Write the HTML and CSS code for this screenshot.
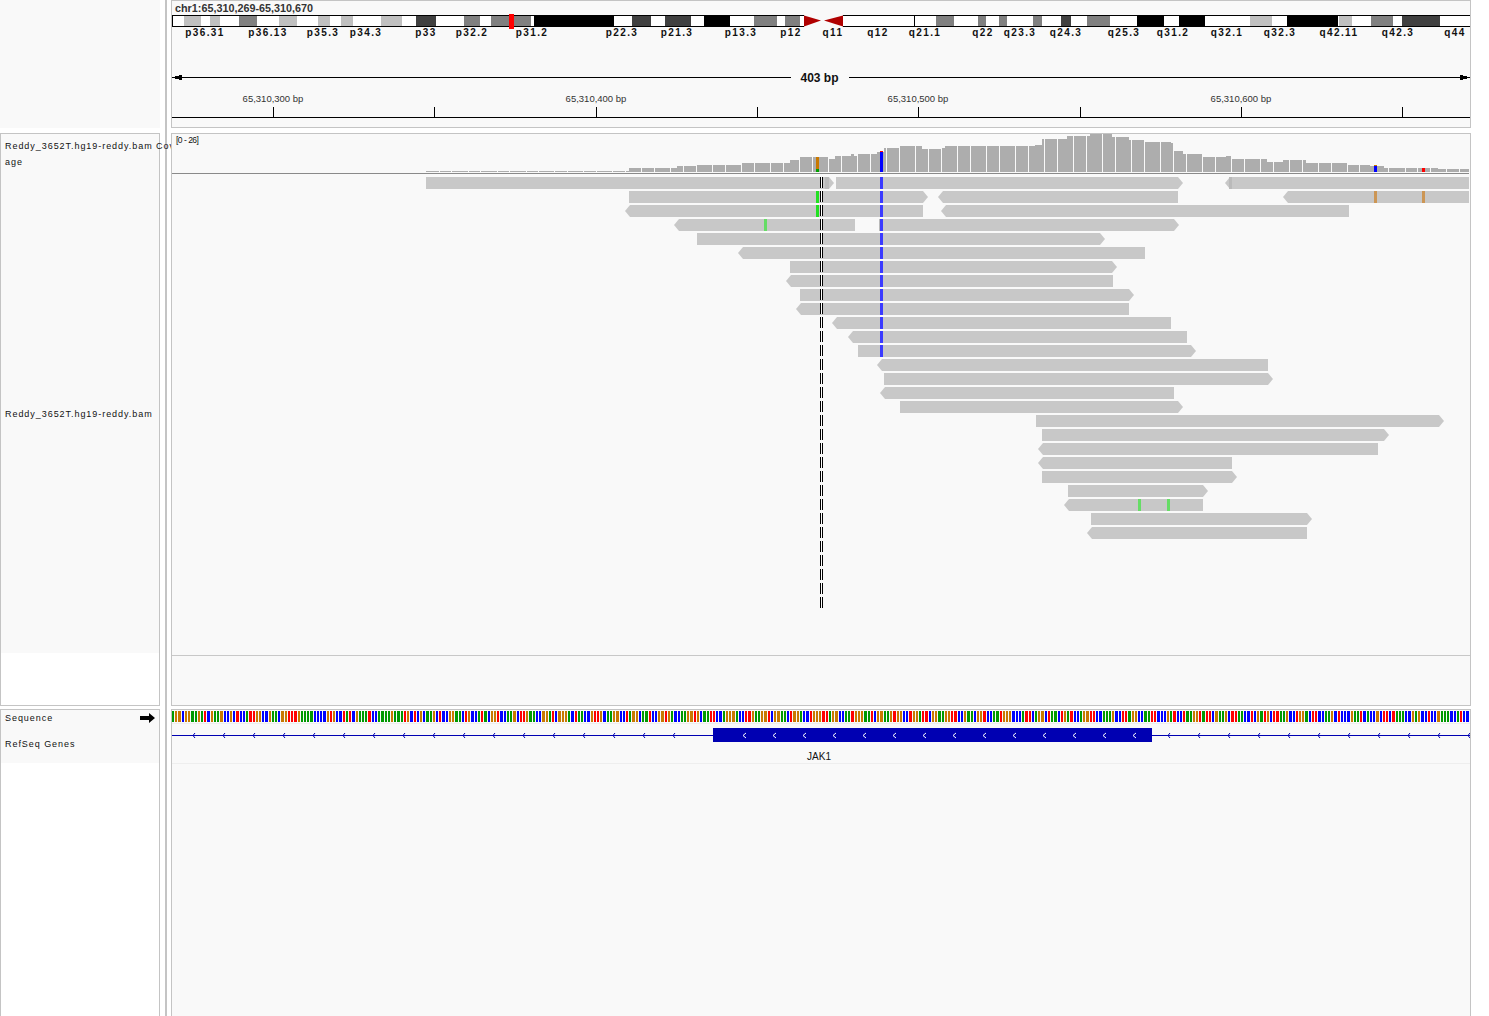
FILE: index.html
```html
<!DOCTYPE html>
<html lang="en">
<head>
    <meta charset="UTF-8">
    <meta name="viewport" content="width=device-width, initial-scale=1.0">
    <title>IGV - JAK1</title>
    <link rel="stylesheet" href="styles.css">
</head>
<body>
    <div class="igv">
        <div class="gutter"></div>

        <div class="name-top"></div>
        <div class="track-box track-top">
            <svg id="headerSvg" class="canvas" viewBox="172 1 1298 126" width="1298" height="126"></svg>
        </div>

        <div class="name-box name-data">
            <div class="name-fill">
                <div class="label label-coverage">
                    <span class="label-line">Reddy_3652T.hg19-reddy.bam Cov</span>
                    <span class="label-line">age</span>
                </div>
                <div class="label label-reads">Reddy_3652T.hg19-reddy.bam</div>
            </div>
        </div>
        <div class="track-box track-data">
            <svg id="dataSvg" class="canvas" viewBox="172 134 1298 571" width="1298" height="571"></svg>
        </div>

        <div class="name-box name-features">
            <div class="name-fill name-fill-features">
                <div class="label label-sequence">
                    <span>Sequence</span>
                    <svg class="seq-arrow" viewBox="0 0 15 10" width="15" height="10">
                        <path d="M0 3H9V0L15 5L9 10V7H0Z"></path>
                    </svg>
                </div>
                <div class="label label-genes">RefSeq Genes</div>
            </div>
        </div>
        <div class="track-box track-features">
            <svg id="featureSvg" class="canvas" viewBox="172 710 1298 306" width="1298" height="306"></svg>
        </div>
    </div>

    <script src="app.js"></script>
</body>
</html>
```

FILE: styles.css
```css
* {
    box-sizing: border-box;
}

body {
    margin: 0;
    background-color: #fff;
    font-family: "Liberation Sans", Arial, sans-serif;
    color: #111;
}

.igv {
    display: grid;
    grid-template-columns: 160px 11px 1300px;
    grid-template-rows: 133px 576px 307px;
    width: 1489px;
    height: 1016px;
    overflow: hidden;
}

.gutter {
    grid-column: 2;
    grid-row: 1 / 4;
    width: 2px;
    margin-left: 5px;
    background-color: #c4c4c4;
}

.name-top {
    grid-column: 1;
    grid-row: 1;
    height: 128px;
    background-color: #f9f9f9;
}

.track-box {
    grid-column: 3;
    background-color: #f9f9f9;
    border: 1px solid #c4c4c4;
    overflow: hidden;
}

.track-top {
    grid-row: 1;
    height: 128px;
}

.track-data {
    grid-row: 2;
    height: 573px;
}

.track-features {
    grid-row: 3;
    height: 308px;
    border-bottom: none;
}

.canvas {
    display: block;
}

.name-box {
    grid-column: 1;
    background-color: #fff;
    border: 1px solid #c4c4c4;
}

.name-data {
    grid-row: 2;
    height: 573px;
}

.name-features {
    grid-row: 3;
    height: 308px;
    border-bottom: none;
}

.name-fill {
    display: flex;
    flex-direction: column;
    height: 519px;
    background-color: #f9f9f9;
}

.name-fill-features {
    height: 53px;
}

.label {
    padding-left: 4px;
    font-size: 9px;
    letter-spacing: 0.95px;
    color: #111;
}

.label-coverage {
    flex: none;
    height: 40px;
    padding-top: 4px;
    line-height: 16px;
}

.label-line {
    display: block;
    white-space: nowrap;
}

.label-reads {
    flex: 1;
    display: flex;
    align-items: center;
}

.label-sequence {
    display: flex;
    justify-content: space-between;
    align-items: center;
    height: 16px;
    padding-right: 4px;
}

.label-genes {
    margin-top: 10px;
    line-height: 16px;
}

.seq-arrow {
    display: block;
    fill: #000;
}

/* chromosome ideogram */
.band {
    shape-rendering: crispEdges;
}
.band-white { fill: #fff; }
.band-light { fill: #c0c0c0; }
.band-gray { fill: #808080; }
.band-dark { fill: #404040; }
.band-black { fill: #000; }
.band-sep { fill: #000; }
.band-edge { fill: #000; }
.band-marker { fill: #f00; }
.centromere { fill: #b00000; }

.band-name {
    font-size: 10px;
    font-weight: bold;
    letter-spacing: 1.4px;
    text-anchor: middle;
    fill: #111;
}

.locus {
    font-size: 10.8px;
    font-weight: bold;
    fill: #333;
}

.span-text {
    font-size: 12px;
    font-weight: bold;
    text-anchor: middle;
    fill: #111;
}

.ruler-text {
    font-size: 9.5px;
    text-anchor: middle;
    fill: #333;
}

.ink {
    fill: #000;
    shape-rendering: crispEdges;
}

/* coverage */
.cov { fill: #adadad; shape-rendering: crispEdges; }
.cov-gap { fill: #f9f9f9; shape-rendering: crispEdges; }
.cov-axis { fill: #8a8a8a; shape-rendering: crispEdges; }
.cov-range {
    font-size: 8.5px;
    letter-spacing: -0.5px;
    fill: #111;
}

/* reads */
.read { fill: #c8c8c8; }
.clip { fill: #bababa; shape-rendering: crispEdges; }
.mis { shape-rendering: crispEdges; }
.mis-c { fill: #3a3aff; }
.mis-a { fill: #22e022; }
.mis-a-faint { fill: #66dd66; }
.mis-g { fill: #cc9655; }
.cov-c { fill: #0000ff; }
.cov-g { fill: #c87800; }
.cov-a { fill: #00a000; }
.cov-t { fill: #f00; }

.center-line {
    stroke-width: 1;
    stroke-dasharray: 11 3;
    shape-rendering: crispEdges;
}
.center-black { stroke: #000; }
.center-white { stroke: #fff; }

.track-rule { fill: #c8c8c8; shape-rendering: crispEdges; }
.faint-rule { fill: #eee; shape-rendering: crispEdges; }

/* sequence and genes */
.base { shape-rendering: crispEdges; }
.base-G { fill: #009900; }
.base-O { fill: #c87800; }
.base-B { fill: #0000ff; }
.base-R { fill: #ff0000; }

.gene { fill: #0000b2; shape-rendering: crispEdges; }
.intron-mark {
    fill: none;
    stroke: #0000b2;
    stroke-width: 1;
}
.exon-mark {
    fill: none;
    stroke: #fff;
    stroke-width: 1;
}
.gene-name {
    font-size: 10px;
    text-anchor: middle;
    fill: #111;
}
```

FILE: app.js
```js
const SVG_NS = "http://www.w3.org/2000/svg";

function add(svg, tag, cls, attrs, text) {
    const el = document.createElementNS(SVG_NS, tag);
    if (cls) el.setAttribute("class", cls);
    for (const key in attrs) el.setAttribute(key, attrs[key]);
    if (text) el.textContent = text;
    svg.appendChild(el);
    return el;
}

function rect(svg, cls, x, y, w, h) {
    return add(svg, "rect", cls, { x: x, y: y, width: w, height: h });
}

// ---- header: ideogram, span and ruler ----
const header = document.getElementById("headerSvg");

// band end x, stain
const pBands = [
    [183.5, "white"], [200.5, "light"], [209.5, "white"], [219.5, "light"], [238.5, "white"],
    [257, "gray"], [278.5, "white"], [296.5, "light"], [317.5, "white"], [329.5, "light"],
    [340.5, "white"], [352.5, "light"], [380.5, "white"], [401.5, "light"], [415.5, "white"],
    [435.5, "dark"], [463.5, "white"], [480, "gray"], [490.5, "white"], [530.5, "gray"],
    [534, "white"], [613.5, "black"], [631.5, "white"], [650.5, "dark"], [664.5, "white"],
    [690.5, "dark"], [703.5, "white"], [729.5, "black"], [753.5, "white"], [776.5, "gray"],
    [784.5, "white"], [799.5, "gray"], [804, "white"]
];
const qBands = [
    [914, "white"], [936, "white"], [954, "gray"], [978, "white"], [986, "gray"],
    [999, "white"], [1007, "gray"], [1033, "white"], [1042, "gray"], [1061, "white"],
    [1071, "dark"], [1087, "white"], [1110, "gray"], [1137, "white"], [1164, "black"],
    [1179, "white"], [1205, "black"], [1250, "white"], [1272, "light"], [1287, "white"],
    [1338, "black"], [1339, "white"], [1352, "light"], [1371, "white"], [1393, "gray"],
    [1402, "white"], [1440, "dark"], [1470, "white"]
];

function drawBands(list, start) {
    let x = start;
    list.forEach(function (band, i) {
        const left = Math.round(x);
        const right = Math.round(band[0]);
        rect(header, "band band-" + band[1], left, 16, right - left, 10);
        if (i > 0 && band[1] === "white" && list[i - 1][1] === "white") {
            rect(header, "band band-sep", left, 16, 1, 10);
        }
        x = band[0];
    });
}

drawBands(pBands, 172);
drawBands(qBands, 843);
rect(header, "band band-edge", 172, 15, 632, 1);
rect(header, "band band-edge", 172, 26, 632, 1);
rect(header, "band band-edge", 843, 15, 627, 1);
rect(header, "band band-edge", 843, 26, 627, 1);
rect(header, "band band-edge", 172, 15, 1, 12);
add(header, "path", "centromere", { d: "M804 15.5L821 20.5L804 26.5Z" });
add(header, "path", "centromere", { d: "M843 15.5L824 20.5L843 26.5Z" });
rect(header, "band band-marker", 509, 14, 5, 15);

const bandNames = [
    ["p36.31", 205], ["p36.13", 268], ["p35.3", 323], ["p34.3", 366], ["p33", 426], ["p32.2", 472],
    ["p31.2", 532], ["p22.3", 622], ["p21.3", 677], ["p13.3", 741], ["p12", 791], ["q11", 833],
    ["q12", 878], ["q21.1", 925], ["q22", 983], ["q23.3", 1020], ["q24.3", 1066], ["q25.3", 1124],
    ["q31.2", 1173], ["q32.1", 1227], ["q32.3", 1280], ["q42.11", 1339], ["q42.3", 1398], ["q44", 1455]
];
bandNames.forEach(function (b) {
    add(header, "text", "band-name", { x: b[1], y: 36 }, b[0]);
});

add(header, "text", "locus", { x: 175, y: 12 }, "chr1:65,310,269-65,310,670");

rect(header, "ink", 172, 77, 619, 1);
rect(header, "ink", 849, 77, 621, 1);
add(header, "path", "ink", { d: "M172 77.5L182 74.5V80.5Z" });
add(header, "path", "ink", { d: "M1470 77.5L1460 74.5V80.5Z" });
add(header, "text", "span-text", { x: 819.5, y: 82 }, "403 bp");

[[273, "65,310,300 bp"], [596, "65,310,400 bp"], [918, "65,310,500 bp"], [1241, "65,310,600 bp"]].forEach(function (t) {
    add(header, "text", "ruler-text", { x: t[0], y: 102 }, t[1]);
});
[273, 434, 596, 757, 918, 1080, 1241, 1402].forEach(function (x) {
    rect(header, "ink", x, 107, 1, 10);
});
rect(header, "ink", 172, 117, 1298, 1);

// ---- alignment panel ----
const data = document.getElementById("dataSvg");
const COV_BOTTOM = 172;

// start x, top y of the coverage histogram
const coverage = [
    [426, 171], [629, 168], [677, 166], [696, 165], [742, 163], [790, 160], [800, 157], [829, 159],
    [835, 156], [851, 154], [854, 156], [858, 154], [877, 152], [884, 148], [900, 146], [922, 149],
    [942, 148], [945, 146], [1035, 145], [1042, 139], [1067, 136], [1090, 134], [1112, 137],
    [1129, 140], [1145, 142], [1171, 143], [1174, 151], [1183, 154], [1203, 157], [1226, 156],
    [1232, 159], [1267, 162], [1283, 160], [1306, 163], [1348, 165], [1370, 166], [1384, 168],
    [1438, 169], [1469, 169]
];
for (let i = 0; i < coverage.length - 1; i++) {
    const top = coverage[i][1];
    rect(data, "cov", coverage[i][0], top, coverage[i + 1][0] - coverage[i][0], COV_BOTTOM - top);
}

// white slits in the histogram fall on base boundaries
for (let n = -36; n < 40; n++) {
    const gapX = Math.round(928 + Math.round(n * 4.47) * 3.22);
    if (gapX > 426 && gapX < 1469) rect(data, "cov-gap", gapX, 134, 1, 38);
}

rect(data, "cov-g", 816, 157, 3, 12);
rect(data, "cov-a", 816, 169, 3, 3);
rect(data, "cov-t", 880, 151, 3, 1);
rect(data, "cov-c", 880, 152, 3, 20);
rect(data, "cov-g", 1374, 165, 3, 1);
rect(data, "cov-c", 1374, 166, 3, 6);
rect(data, "cov-t", 1422, 168, 3, 4);
rect(data, "cov-axis", 172, 173, 1297, 1);
add(data, "text", "cov-range", { x: 176, y: 143 }, "[0 - 26]");

// one list per row: start, end, strand
const reads = [
    [[426, 834, "R"], [836, 1183, "R"], [1225, 1469, "L"]],
    [[629, 928, "R"], [938, 1178, "L"], [1283, 1469, "L"]],
    [[625, 923, "L"], [941, 1349, "L"]],
    [[674, 855, "L"], [879, 1179, "R"]],
    [[697, 1105, "R"]],
    [[738, 1145, "L"]],
    [[790, 1117, "R"]],
    [[786, 1113, "L"]],
    [[800, 1134, "R"]],
    [[796, 1129, "L"]],
    [[832, 1171, "L"]],
    [[848, 1187, "L"]],
    [[858, 1196, "R"]],
    [[877, 1268, "L"]],
    [[884, 1273, "R"]],
    [[880, 1174, "L"]],
    [[900, 1183, "R"]],
    [[1036, 1444, "R"]],
    [[1042, 1389, "R"]],
    [[1038, 1378, "L"]],
    [[1038, 1232, "L"]],
    [[1042, 1237, "R"]],
    [[1068, 1208, "R"]],
    [[1064, 1203, "L"]],
    [[1091, 1312, "R"]],
    [[1087, 1307, "L"]]
];

function rowY(row) {
    return 177 + row * 14;
}

reads.forEach(function (list, row) {
    const y = rowY(row);
    list.forEach(function (r) {
        let d;
        if (r[2] === "R") {
            d = "M" + r[0] + " " + y + "H" + (r[1] - 5) + "L" + r[1] + " " + (y + 6) + "L" + (r[1] - 5) + " " + (y + 12) + "H" + r[0] + "Z";
        } else {
            d = "M" + r[1] + " " + y + "H" + (r[0] + 5) + "L" + r[0] + " " + (y + 6) + "L" + (r[0] + 5) + " " + (y + 12) + "H" + r[1] + "Z";
        }
        add(data, "path", "read", { d: d });
    });
});

rect(data, "clip", 825, rowY(0), 4, 12);
rect(data, "clip", 1229, rowY(0), 3, 12);
rect(data, "clip", 879, rowY(3), 1, 12);

for (let row = 0; row <= 12; row++) {
    rect(data, "mis mis-c", 880, rowY(row), 3, 12);
}
rect(data, "mis mis-a", 816, rowY(1), 3, 12);
rect(data, "mis mis-a", 816, rowY(2), 3, 12);
rect(data, "mis mis-a-faint", 764, rowY(3), 3, 12);
rect(data, "mis mis-a-faint", 1138, rowY(23), 3, 12);
rect(data, "mis mis-a-faint", 1167, rowY(23), 3, 12);
rect(data, "mis mis-g", 1374, rowY(1), 3, 12);
rect(data, "mis mis-g", 1422, rowY(1), 3, 12);

// center guide: two dashed lines
[[820.5, "center-black"], [821.5, "center-white"], [822.5, "center-black"]].forEach(function (l) {
    add(data, "line", "center-line " + l[1], { x1: l[0], y1: 177, x2: l[0], y2: 610 });
});

rect(data, "track-rule", 172, 655, 1298, 1);

// ---- sequence and gene ----
const feat = document.getElementById("featureSvg");
const bases =
    "GOOBOOGGOGRBOGGOBBOBRBBGRROOBBOGGBOORRROGGGGBBBBOROBBRGRBOGGGRBBGGGGOGGGROBRBOBG" +
    "GOBRBBOOGGBROBBGRGBOORBBGGOBRROGGBBOOGRBOOOGBRGGBBORROBGGOOBBRGOOBGGRBBOOROGBBGG" +
    "OOROBGGRRBBGOOOGBBRROGGOORBOOGGBROOGBBROOORRGOOBBGGROOOGGRBOOGGOROOBBROOGRRBOOGG" +
    "OORRBBOGGBOORBBGGROOOBBBGRRBGOOBRGGBROGRBBGOORRBBGGGOBBRRGOOBBGGRRBBBOGRBBRGGOOR" +
    "GRRBOGGOBRRGGBBRBOGROBRRGGOBBROOGBRRBBGGOBRBBBOGGRBGBBOBRRBRGGGBBOGOBBRBBOGGGBBG" +
    "RBBBGGOGBGBO";

for (let i = 0; i < 403; i++) {
    const x = Math.round(172 + i * 3.22);
    const next = Math.round(172 + (i + 1) * 3.22);
    rect(feat, "base base-" + bases.charAt(i % bases.length), x, 711, next - x - 1, 11);
}
rect(feat, "faint-rule", 172, 723, 1298, 1);

rect(feat, "gene", 172, 735, 1298, 1);
rect(feat, "gene", 713, 728, 439, 14);

for (let x = 193; x <= 673; x += 30) {
    add(feat, "path", "intron-mark", { d: "M" + (x + 2) + " 733L" + x + " 735.5L" + (x + 2) + " 738" });
}
for (let x = 1168; x <= 1468; x += 30) {
    add(feat, "path", "intron-mark", { d: "M" + (x + 2) + " 733L" + x + " 735.5L" + (x + 2) + " 738" });
}
for (let x = 743; x <= 1133; x += 30) {
    add(feat, "path", "exon-mark", { d: "M" + (x + 3) + " 733L" + x + " 735.5L" + (x + 3) + " 738" });
}

add(feat, "text", "gene-name", { x: 819, y: 760 }, "JAK1");
rect(feat, "faint-rule", 172, 763, 1298, 1);
```
